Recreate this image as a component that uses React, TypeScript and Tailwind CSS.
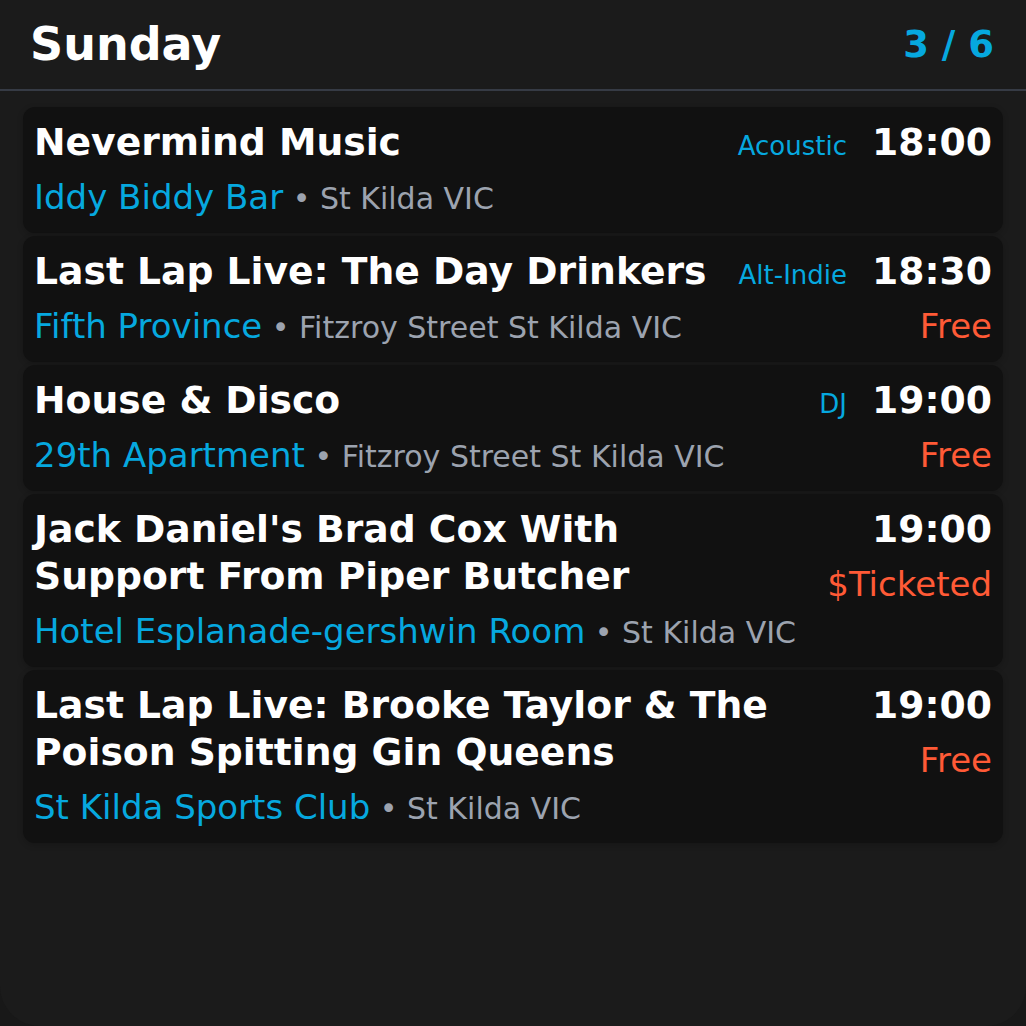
import React from "react";

type Ev = {
  title: string;
  venue: string;
  loc: string;
  genre?: string;
  time: string;
  price?: string;
};

const events: Ev[] = [
  { title: "Nevermind Music", venue: "Iddy Biddy Bar", loc: "St Kilda VIC", genre: "Acoustic", time: "18:00" },
  { title: "Last Lap Live: The Day Drinkers", venue: "Fifth Province", loc: "Fitzroy Street St Kilda VIC", genre: "Alt-Indie", time: "18:30", price: "Free" },
  { title: "House & Disco", venue: "29th Apartment", loc: "Fitzroy Street St Kilda VIC", genre: "DJ", time: "19:00", price: "Free" },
  { title: "Jack Daniel's Brad Cox With Support From Piper Butcher", venue: "Hotel Esplanade-gershwin Room", loc: "St Kilda VIC", time: "19:00", price: "$Ticketed" },
  { title: "Last Lap Live: Brooke Taylor & The Poison Spitting Gin Queens", venue: "St Kilda Sports Club", loc: "St Kilda VIC", time: "19:00", price: "Free" },
];

function Card({ e }: { e: Ev }) {
  return (
    <div className="flex justify-between gap-[25px] rounded-[12px] bg-[#111111] px-[11px] py-[12px] shadow-[0_2px_6px_rgba(0,0,0,0.2)]">
      <div className="min-w-0 flex-1">
        <div className="text-[37.7px] font-bold leading-[47px] text-white">{e.title}</div>
        <div className="mt-[8px] whitespace-nowrap text-[34px] leading-[47px]">
          <span className="text-[#06a8df]">{e.venue}</span>
          <span className="text-[30px] leading-none text-[#9ca3af]"> • {e.loc}</span>
        </div>
      </div>
      <div className="flex shrink-0 flex-col items-end">
        <div className="flex items-baseline gap-[25px]">
          {e.genre && <span className="text-[26px] leading-none text-[#06a8df]">{e.genre}</span>}
          <span className="text-[37.7px] font-bold leading-[47px] text-white">{e.time}</span>
        </div>
        {e.price && (
          <div className="mt-[8px] text-[34px] leading-[47px] text-[#ff5a36]">{e.price}</div>
        )}
      </div>
    </div>
  );
}

export default function App() {
  return (
    <div
      className="h-[1026px] w-[1026px] bg-[#181818]"
      style={{ fontFamily: "'DejaVu Sans', sans-serif" }}
    >
      <div className="h-full w-full overflow-hidden rounded-[40px] rounded-t-none bg-[#1b1b1b]">
        <div className="flex h-[89px] items-center justify-between pl-[30px] pr-[32px]">
          <span className="text-[46px] font-bold text-white">Sunday</span>
          <span className="text-[37px] font-bold text-[#06a8df]">3 / 6</span>
        </div>
        <div className="h-[2px] bg-[#363b45]" />
        <div className="flex flex-col gap-[3px] px-[23px] pt-[16px]">
          {events.map((e, i) => (
            <Card key={i} e={e} />
          ))}
        </div>
      </div>
    </div>
  );
}
